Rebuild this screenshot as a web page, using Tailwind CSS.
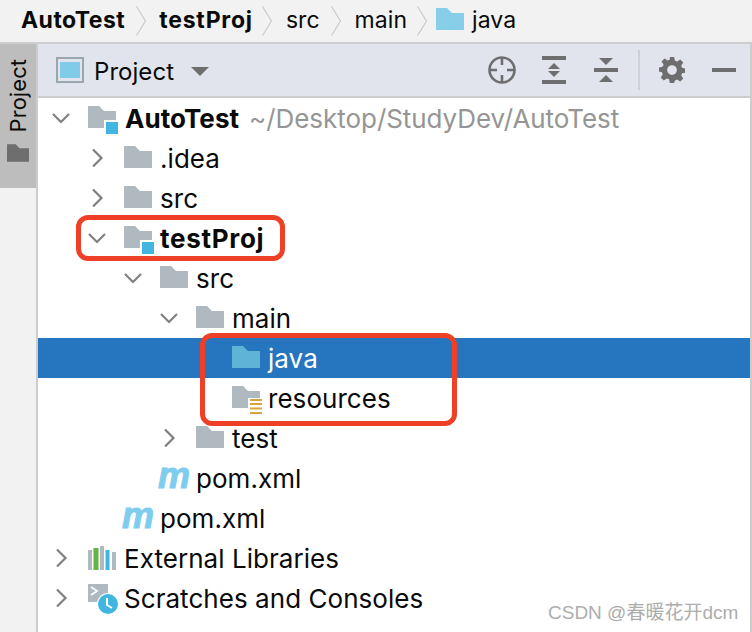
<!DOCTYPE html>
<html lang="en">
<head>
    <meta charset="UTF-8">
    <meta name="viewport" content="width=device-width, initial-scale=1.0">
    <title>Project tool window</title>
    <script src="https://cdn.jsdelivr.net/npm/@tailwindcss/browser@4"></script>
</head>
<body class="w-[752px] h-[632px] overflow-hidden bg-white font-['Inter',sans-serif] text-[26px] tracking-[0.05px] text-[#0a0a0a]">
    <svg class="hidden">
        <symbol id="folder" viewBox="0 0 28 22"><path d="M0 0H11L16 5H28V22H0Z" fill="currentColor"/></symbol>
        <symbol id="open" viewBox="0 0 18 18"><path d="M1 5L9 13L17 5" fill="none" stroke="#808080" stroke-width="2.2"/></symbol>
        <symbol id="closed" viewBox="0 0 18 18"><path d="M5 0.500L13.500 9L5 17.500" fill="none" stroke="#808080" stroke-width="2.2"/></symbol>
        <symbol id="module" viewBox="0 0 30 28"><path d="M0 0H11L16 5H28V22H0Z" fill="#afb9bf"/><rect x="16" y="14" width="14" height="14" fill="#fff"/><rect x="18" y="16" width="12" height="12" fill="#40b6e0"/></symbol>
    </svg>

    <!-- breadcrumb -->
    <header class="h-[44px] bg-[#f2f2f2] border-b-2 border-[#cdcdcd] flex items-center pl-[21px] text-[23px]">
        <span class="font-bold tracking-[0.45px] -mt-[2px]">AutoTest</span>
        <svg class="w-[10px] h-[30px] ml-[11px] mr-[13px]" viewBox="0 0 10 30"><path d="M0.500 0.500L9.500 15L0.500 29.500" fill="none" stroke="#c9c9c9" stroke-width="1.2"/></svg>
        <span class="font-bold tracking-[0.8px] -mt-[2px]">testProj</span>
        <svg class="w-[10px] h-[30px] ml-[9px] mr-[14px]" viewBox="0 0 10 30"><path d="M0.500 0.500L9.500 15L0.500 29.500" fill="none" stroke="#c9c9c9" stroke-width="1.2"/></svg>
        <span class="-mt-[2px]">src</span>
        <svg class="w-[10px] h-[30px] ml-[11px] mr-[14px]" viewBox="0 0 10 30"><path d="M0.500 0.500L9.500 15L0.500 29.500" fill="none" stroke="#c9c9c9" stroke-width="1.2"/></svg>
        <span class="-mt-[2px]">main</span>
        <svg class="w-[10px] h-[30px] ml-[10px] mr-[9px]" viewBox="0 0 10 30"><path d="M0.500 0.500L9.500 15L0.500 29.500" fill="none" stroke="#c9c9c9" stroke-width="1.2"/></svg>
        <svg class="w-[28px] h-[22px] text-[#87cfe9] mr-[8px] -mt-[4px]"><use href="#folder"/></svg>
        <span class="-mt-[2px]">java</span>
    </header>

    <div class="flex h-[588px] border-r-2 border-[#cdcdcd]">
        <!-- side strip -->
        <aside class="w-[38px] shrink-0 bg-[#f2f2f2] border-r-2 border-[#cdcdcd]">
            <div class="h-[144px] bg-[#bdbdbd] flex flex-col items-center pt-[15px] gap-[12px]">
                <span class="[writing-mode:vertical-rl] rotate-180 text-[22px] leading-[22px] -ml-[1px]">Project</span>
                <svg class="w-[22px] h-[18px] text-[#6e6e6e]"><use href="#folder"/></svg>
            </div>
        </aside>

        <main class="flex-1 min-w-0">
            <!-- toolbar -->
            <div class="h-[54px] bg-[#e1e4ec] border-b-2 border-[#cdcdcd] flex items-center pl-[18px]">
                <svg class="w-[28px] h-[26px]" viewBox="0 0 28 26"><rect width="28" height="26" fill="#9aa7b0"/><rect x="2" y="2" width="24" height="22" fill="#e1e4ec"/><rect x="4" y="5" width="20" height="16" fill="#7fcbe8"/></svg>
                <span class="ml-[10px] text-[24px] mt-[4px]">Project</span>
                <svg class="w-[18px] h-[9px] ml-[17px] mt-[2px]" viewBox="0 0 18 9"><path d="M0 0H18L9 9Z" fill="#6e6e6e"/></svg>
                <div class="ml-auto flex items-center">
                    <svg class="w-[28px] h-[28px]" viewBox="0 0 28 28" fill="none" stroke="#6e6e6e" stroke-width="2.6"><circle cx="14" cy="14" r="12.500"/><path d="M14 1V9M14 19V27M1 14H9M19 14H27"/></svg>
                    <svg class="w-[24px] h-[28px] ml-[26px]" viewBox="0 0 24 28" fill="#6e6e6e"><rect width="24" height="4"/><rect y="24" width="24" height="4"/><path d="M12 7L18 13H6Z"/><path d="M12 21L18 15H6Z"/></svg>
                    <svg class="w-[24px] h-[26px] ml-[28px]" viewBox="0 0 24 26" fill="#6e6e6e"><rect y="11" width="24" height="4"/><path d="M5 1H19L12 8Z"/><path d="M5 25H19L12 18Z"/></svg>
                    <div class="w-[2px] h-[40px] bg-[#cdd0d6] ml-[20px]"></div>
                    <svg class="w-[26px] h-[26px] ml-[19px]" viewBox="0 0 24 24"><path fill="#6e6e6e" fill-rule="evenodd" d="M10 0h4l.7 3.400 2 .8L19.600 2.300l2.800 2.800-1.900 2.900.8 2 3.400.7v3.600l-3.400.7-.8 2 1.900 2.900-2.800 2.800-2.900-1.900-2 .8L14 24h-4l-.7-3.400-2-.8-2.900 1.900-2.800-2.800 1.900-2.900-.8-2L0 13.300V9.700l3.400-.7.8-2-1.900-2.900 2.800-2.800 2.900 1.900 2-.8zM12 7.500a4.500 4.500 0 1 0 0 9 4.500 4.500 0 0 0 0-9z"/></svg>
                    <div class="w-[24px] h-[4px] bg-[#6e6e6e] ml-[27px] mr-[14px]"></div>
                </div>
            </div>

            <!-- tree -->
            <ul class="leading-[40px]">
                <li class="h-[40px] flex items-center pl-[14px]">
                    <svg class="w-[18px] h-[18px]"><use href="#open"/></svg>
                    <svg class="w-[30px] h-[28px] ml-[18px] mt-[4px]"><use href="#module"/></svg>
                    <span class="ml-[7px] mt-[2px] font-bold">AutoTest</span>
                    <span class="ml-[10px] mt-[2px] text-[#959595] tracking-[-0.05px]">~/Desktop/StudyDev/AutoTest</span>
                </li>
                <li class="h-[40px] flex items-center pl-[50px]">
                    <svg class="w-[18px] h-[18px]"><use href="#closed"/></svg>
                    <svg class="w-[28px] h-[22px] ml-[18px] -mt-[2px] text-[#afb9bf]"><use href="#folder"/></svg>
                    <span class="ml-[8px] mt-[2px]">.idea</span>
                </li>
                <li class="h-[40px] flex items-center pl-[50px]">
                    <svg class="w-[18px] h-[18px]"><use href="#closed"/></svg>
                    <svg class="w-[28px] h-[22px] ml-[18px] -mt-[2px] text-[#afb9bf]"><use href="#folder"/></svg>
                    <span class="ml-[8px] mt-[2px]">src</span>
                </li>
                <li class="h-[40px] flex items-center pl-[50px]">
                    <svg class="w-[18px] h-[18px]"><use href="#open"/></svg>
                    <svg class="w-[30px] h-[28px] ml-[18px] mt-[4px]"><use href="#module"/></svg>
                    <span class="ml-[6px] mt-[2px] font-bold tracking-[0.7px]">testProj</span>
                </li>
                <li class="h-[40px] flex items-center pl-[86px]">
                    <svg class="w-[18px] h-[18px]"><use href="#open"/></svg>
                    <svg class="w-[28px] h-[22px] ml-[18px] -mt-[2px] text-[#afb9bf]"><use href="#folder"/></svg>
                    <span class="ml-[8px] mt-[2px]">src</span>
                </li>
                <li class="h-[40px] flex items-center pl-[122px]">
                    <svg class="w-[18px] h-[18px]"><use href="#open"/></svg>
                    <svg class="w-[28px] h-[22px] ml-[18px] -mt-[2px] text-[#afb9bf]"><use href="#folder"/></svg>
                    <span class="ml-[8px] mt-[2px]">main</span>
                </li>
                <li class="h-[40px] flex items-center pl-[194px] bg-[#2675bf] text-white">
                    <svg class="w-[28px] h-[22px] -mt-[2px] text-[#5fb4d6]"><use href="#folder"/></svg>
                    <span class="ml-[8px] mt-[2px]">java</span>
                </li>
                <li class="h-[40px] flex items-center pl-[194px]">
                    <svg class="w-[32px] h-[28px] mt-[4px]" viewBox="0 0 32 28"><path d="M0 0H11L16 5H28V22H0Z" fill="#afb9bf"/><rect x="16" y="12" width="16" height="16" fill="#fff"/><path d="M18 14H30M18 18H30M18 22.500H30M18 27H30" stroke="#d9a343" stroke-width="2"/></svg>
                    <span class="ml-[4px] mt-[2px]">resources</span>
                </li>
                <li class="h-[40px] flex items-center pl-[122px]">
                    <svg class="w-[18px] h-[18px]"><use href="#closed"/></svg>
                    <svg class="w-[28px] h-[22px] ml-[18px] -mt-[2px] text-[#afb9bf]"><use href="#folder"/></svg>
                    <span class="ml-[8px] mt-[2px]">test</span>
                </li>
                <li class="h-[40px] flex items-center pl-[120px]">
                    <span class="w-[30px] font-['Liberation_Sans',sans-serif] font-bold italic text-[#7fcdee] text-[36px] leading-[40px] [-webkit-text-stroke:1px_#7fcdee] scale-y-[1.05] -mt-[6px] whitespace-nowrap">m</span>
                    <span class="ml-[8px] mt-[2px]">pom.xml</span>
                </li>
                <li class="h-[40px] flex items-center pl-[84px]">
                    <span class="w-[30px] font-['Liberation_Sans',sans-serif] font-bold italic text-[#7fcdee] text-[36px] leading-[40px] [-webkit-text-stroke:1px_#7fcdee] scale-y-[1.05] -mt-[6px] whitespace-nowrap">m</span>
                    <span class="ml-[8px] mt-[2px]">pom.xml</span>
                </li>
                <li class="h-[40px] flex items-center pl-[14px]">
                    <svg class="w-[18px] h-[18px]"><use href="#closed"/></svg>
                    <svg class="w-[28px] h-[24px] ml-[18px]" viewBox="0 0 28 24"><rect y="4" width="4" height="20" fill="#afb9bf"/><rect x="5.500" y="2" width="5" height="22" fill="#62b543"/><rect x="12" y="0" width="4" height="24" fill="#afb9bf"/><rect x="17.500" y="4" width="4" height="20" fill="#40b6e0"/><rect x="24" y="6" width="4" height="18" fill="#afb9bf"/></svg>
                    <span class="ml-[8px] mt-[2px]">External Libraries</span>
                </li>
                <li class="h-[40px] flex items-center pl-[14px]">
                    <svg class="w-[18px] h-[18px]"><use href="#closed"/></svg>
                    <svg class="w-[31px] h-[30px] ml-[18px] mt-[2px]" viewBox="0 0 31 30"><rect width="20" height="18" fill="#afb9bf"/><path d="M3 3L9 7L3 11" fill="none" stroke="#fff" stroke-width="1.800"/><circle cx="20" cy="20" r="11" fill="#fff"/><circle cx="20" cy="20" r="10" fill="#40b6e0"/><path d="M19 14V21L24 24" fill="none" stroke="#fff" stroke-width="2"/></svg>
                    <span class="ml-[5px] mt-[2px]">Scratches and Consoles</span>
                </li>
            </ul>
        </main>
    </div>

    <!-- annotation rectangles -->
    <div class="absolute left-[76px] top-[215px] w-[209px] h-[46px] border-[5px] border-[#ee4026] rounded-[12px]"></div>
    <div class="absolute left-[200px] top-[333px] w-[257px] h-[93px] border-[5px] border-[#ee4026] rounded-[12px]"></div>

    <!-- watermark -->
    <div class="absolute left-[548px] top-[601px] text-[19px] leading-[24px] tracking-normal text-[#adadad] font-['Liberation_Sans','Noto_Sans_CJK_SC',sans-serif] whitespace-nowrap">CSDN @春暖花开dcm</div>
</body>
</html>
